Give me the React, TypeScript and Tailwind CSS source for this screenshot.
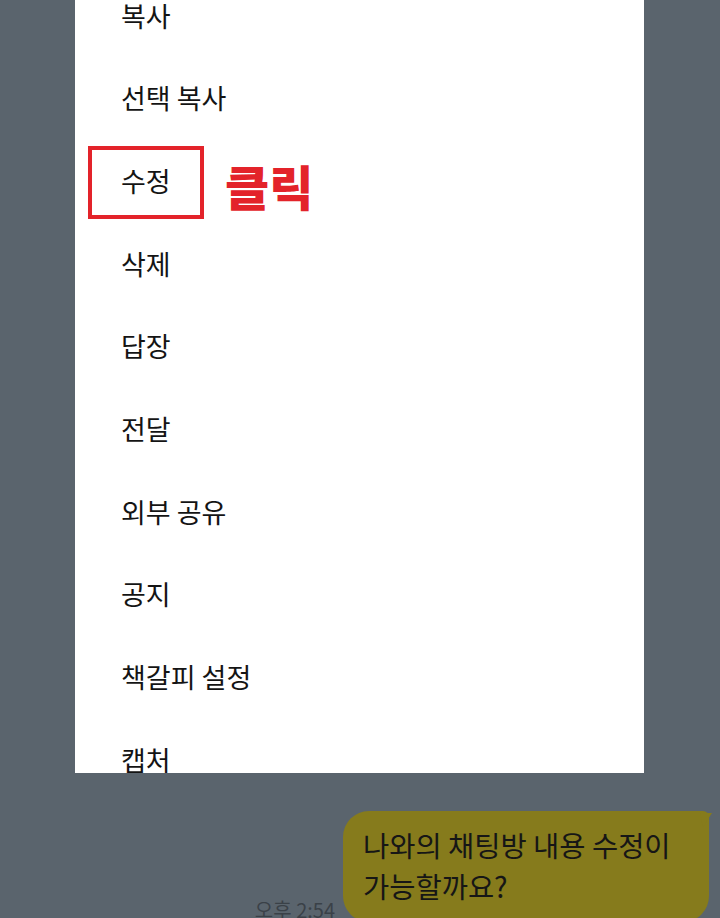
import React from "react";

const menuItems = [
  "복사",
  "선택 복사",
  "수정",
  "삭제",
  "답장",
  "전달",
  "외부 공유",
  "공지",
  "책갈피 설정",
  "캡처",
];

const KR_FONT = "font-['Noto_Sans_CJK_KR','Noto_Sans',sans-serif]";

function MenuItem({ label, highlighted }: { label: string; highlighted?: boolean }) {
  return (
    <div className="relative flex h-[82.67px] items-center pl-[46px]">
      <span className="text-[27px] leading-none text-[#141414]">{label}</span>
      {highlighted && (
        <>
          {/* annotation box + label */}
          <div className="absolute left-[13px] top-[7px] h-[73px] w-[116px] border-[4px] border-[#e3232a]" />
          <span className="absolute left-[150px] top-[22px] text-[48px] font-black leading-none text-[#e3232a]">
            클릭
          </span>
        </>
      )}
    </div>
  );
}

function ChatBubble({ text }: { text: string }) {
  return (
    <div className="relative w-[366px] rounded-[26px] rounded-tr-[6px] bg-[#867b1c] pb-[16px] pl-[20px] pr-[14px] pt-[13px]">
      {/* bubble tail */}
      <svg
        className="absolute -right-[3px] top-[2px]"
        width="12"
        height="14"
        viewBox="0 0 12 14"
      >
        <path d="M0 0 L12 0 L3 14 Z" fill="#867b1c" />
      </svg>
      <p className="break-keep text-[28.5px] leading-[41px] text-[#161616]">{text}</p>
    </div>
  );
}

export default function App() {
  return (
    <div className={`flex h-[918px] w-[720px] flex-col overflow-hidden bg-[#5a646d] ${KR_FONT}`}>
      {/* MENU PANEL */}
      <div className="ml-[75px] h-[773px] w-[569px] shrink-0 overflow-hidden bg-white">
        <div className="-mt-[26px] flex flex-col">
          {menuItems.map((item) => (
            <MenuItem key={item} label={item} highlighted={item === "수정"} />
          ))}
        </div>
      </div>

      {/* CHAT ROW */}
      <div className="mt-[38px] flex items-end justify-end gap-[8px] pr-[11px]">
        <span className="mb-[0px] text-[20px] leading-[24px] text-[#3a4148]">오후 2:54</span>
        <ChatBubble text="나와의 채팅방 내용 수정이 가능할까요?" />
      </div>
    </div>
  );
}
